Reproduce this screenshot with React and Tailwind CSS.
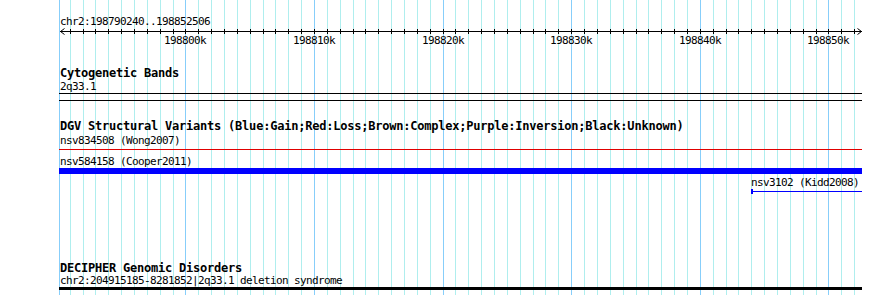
import React from 'react'

// genomic scale: px for a kb position along chr2
const KB_PX = 12.86
const X_198800 = 185.4
const kbX = kb => Math.round(X_198800 + (kb - 198800) * KB_PX)

const TRACK_LEFT = 59
const TRACK_W = 803

const kbs = []
for (let k = 198791; k <= 198852; k++) kbs.push(k)
const majors = kbs.filter(k => k % 10 === 0)

const mono = "font-['DejaVu_Sans_Mono',monospace] text-black"
const small = `${mono} text-[11px] leading-[13px] tracking-[-0.62px] whitespace-nowrap`
const bold = `${mono} font-bold text-[12px] leading-[13px] tracking-[-0.22px] whitespace-nowrap`

const Grid = () => (
  <svg className="absolute inset-0" width="890" height="295" shapeRendering="crispEdges">
    <rect x={TRACK_LEFT} y="0" width="1" height="295" fill="#87cefa" />
    {kbs.map(k => (
      <rect key={k} x={kbX(k)} y="0" width="1" height="295" fill={k % 10 === 0 ? '#87cefa' : '#afeeee'} />
    ))}
  </svg>
)

const Ruler = () => (
  <div className="relative h-[17px]">
    <svg className="absolute left-0 top-0" width="890" height="8" shapeRendering="crispEdges">
      <rect x="60" y="3" width="802" height="1" fill="#000" />
      {kbs.map(k => (
        <rect key={k} x={kbX(k)} y="1" width="1" height="5" fill="#000" />
      ))}
      <path d="M60.5 3.5 L64.5 0.5 M60.5 3.5 L64.5 6.5 M861.5 3.5 L857.5 0.5 M861.5 3.5 L857.5 6.5" stroke="#000" strokeWidth="1" fill="none" shapeRendering="auto" />
    </svg>
    {majors.map(k => (
      <span key={k} className={`absolute top-[6px] ${small}`} style={{ left: kbX(k) - 21 }}>
        {k}k
      </span>
    ))}
  </div>
)

const Title = ({ children, className = '' }) => (
  <div className={`pl-px ${bold} ${className}`}>{children}</div>
)

const Label = ({ children, className = '', style }) => (
  <div className={`pl-px ${small} ${className}`} style={style}>{children}</div>
)

export default function App() {
  return (
    <div className="relative w-[890px] h-[295px] overflow-hidden bg-white">
      <Grid />
      <div className="relative pt-[15px]">
        <div className={`pl-[60px] ${small}`}>chr2:198790240..198852506</div>
        <Ruler />

        <div className="ml-[59px] w-[803px] mt-[22px]">
          {/* Cytogenetic Bands */}
          <Title>Cytogenetic Bands</Title>
          <Label>2q33.1</Label>
          <div className="h-[8px] border-y border-black" />

          {/* DGV */}
          <Title className="mt-[19px]">
            DGV Structural Variants (Blue:Gain;Red:Loss;Brown:Complex;Purple:Inversion;Black:Unknown)
          </Title>
          <Label className="mt-px">nsv834508 (Wong2007)</Label>
          <div className="h-[5px] flex items-center">
            <div className="h-px w-full bg-[#e00000]" />
          </div>
          <Label className="mt-[3px]">nsv584158 (Cooper2011)</Label>
          <div className="h-[6px] bg-[#0000ff]" />
          <Label className="mt-[2px]" style={{ marginLeft: 750 - TRACK_LEFT }}>nsv3102 (Kidd2008)</Label>
          <div className="h-[5px] flex items-center" style={{ marginLeft: 751 - TRACK_LEFT }}>
            <div className="w-[2px] h-[5px] bg-[#0000ff]" />
            <div className="h-px flex-1 bg-[#0000ff]" />
          </div>

          {/* DECIPHER */}
          <Title className="mt-[68px] h-[12px]">DECIPHER Genomic Disorders</Title>
          <Label>chr2:204915185-8281852|2q33.1 deletion syndrome</Label>
          <div className="h-[3px] bg-black" />
        </div>
      </div>
    </div>
  )
}
